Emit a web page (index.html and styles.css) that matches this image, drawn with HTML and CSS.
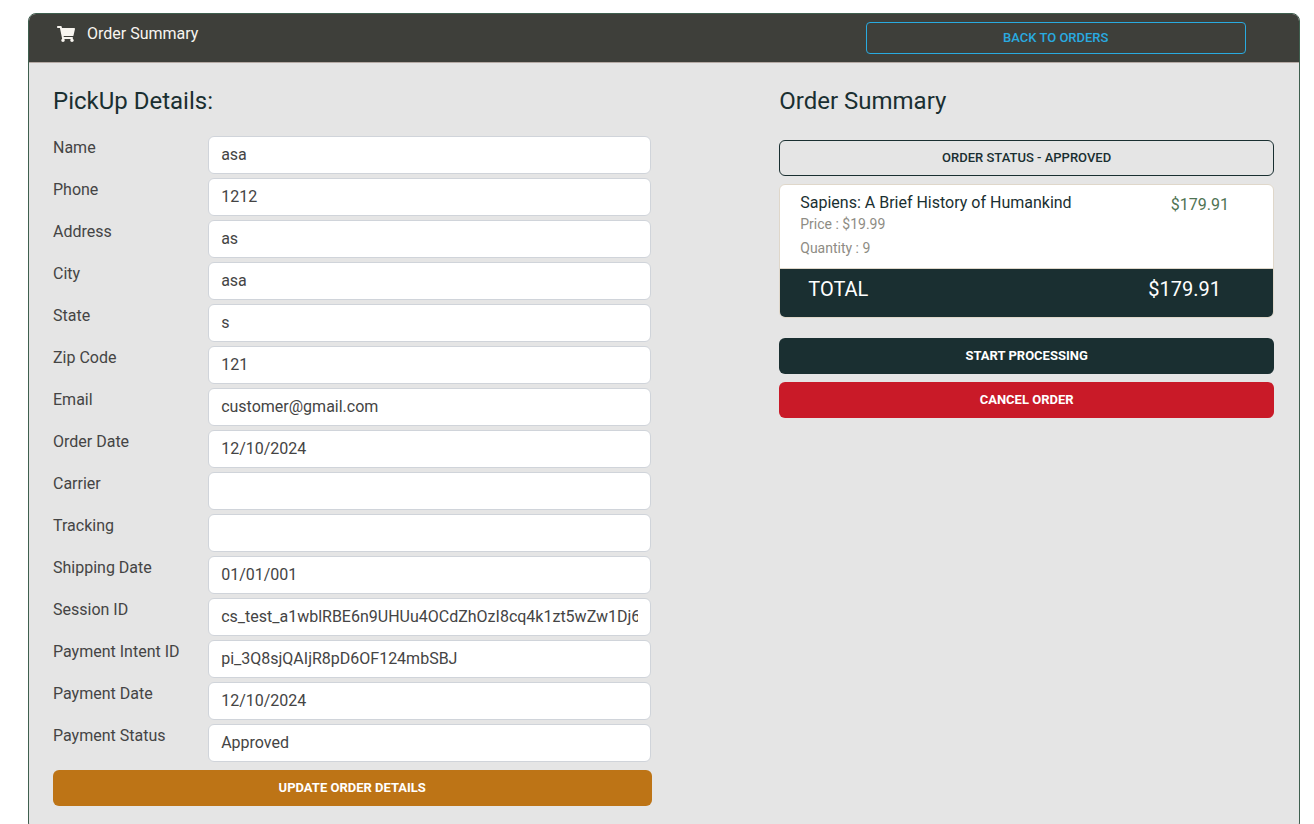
FILE: index.html
```html
<!DOCTYPE html>
<html lang="en">
<head>
<meta charset="utf-8">
<meta name="viewport" content="width=device-width, initial-scale=1">
<title>Order Summary</title>
<link rel="stylesheet" href="styles.css">
</head>
<body>
<main class="card">
  <header class="card-header">
    <div class="card-title">
      <svg class="cart-icon" viewBox="0 0 576 512" aria-hidden="true"><path fill="currentColor" d="M528.12 301.319l47.273-208C578.806 78.301 567.391 64 551.99 64H159.208l-9.166-44.81C147.758 8.021 137.93 0 126.529 0H24C10.745 0 0 10.745 0 24v16c0 13.255 10.745 24 24 24h69.883l70.248 343.435C147.325 417.1 136 435.222 136 456c0 30.928 25.072 56 56 56s56-25.072 56-56c0-15.674-6.447-29.835-16.824-40h209.647C430.447 426.165 424 440.326 424 456c0 30.928 25.072 56 56 56s56-25.072 56-56c0-22.172-12.888-41.332-31.579-50.405l5.517-24.276c3.413-15.018-8.002-29.319-23.403-29.319H218.117l-6.545-32h293.145c11.206 0 20.92-7.754 23.403-18.681z"/></svg>
      <span>Order Summary</span>
    </div>
    <a class="btn btn-outline-info" href="#">Back to Orders</a>
  </header>
  <form class="card-body">
    <section class="details">
      <h4 class="heading">PickUp Details:</h4>
      <div class="fields">
        <div class="field"><label for="name">Name</label><input id="name" type="text" value="asa"></div>
        <div class="field"><label for="phone">Phone</label><input id="phone" type="text" value="1212"></div>
        <div class="field"><label for="address">Address</label><input id="address" type="text" value="as"></div>
        <div class="field"><label for="city">City</label><input id="city" type="text" value="asa"></div>
        <div class="field"><label for="state">State</label><input id="state" type="text" value="s"></div>
        <div class="field"><label for="zip">Zip Code</label><input id="zip" type="text" value="121"></div>
        <div class="field"><label for="email">Email</label><input id="email" type="text" value="customer@gmail.com"></div>
        <div class="field"><label for="orderdate">Order Date</label><input id="orderdate" type="text" value="12/10/2024"></div>
        <div class="field"><label for="carrier">Carrier</label><input id="carrier" type="text"></div>
        <div class="field"><label for="tracking">Tracking</label><input id="tracking" type="text"></div>
        <div class="field"><label for="shipdate">Shipping Date</label><input id="shipdate" type="text" value="01/01/001"></div>
        <div class="field"><label for="session">Session ID</label><input id="session" type="text" value="cs_test_a1wblRBE6n9UHUu4OCdZhOzI8cq4k1zt5wZw1Dj6"></div>
        <div class="field"><label for="intent">Payment Intent ID</label><input id="intent" type="text" value="pi_3Q8sjQAIjR8pD6OF124mbSBJ"></div>
        <div class="field"><label for="paydate">Payment Date</label><input id="paydate" type="text" value="12/10/2024"></div>
        <div class="field"><label for="paystatus">Payment Status</label><input id="paystatus" type="text" value="Approved"></div>
      </div>
      <button class="btn btn-warning" type="submit">Update Order Details</button>
    </section>
    <section class="summary">
      <h4 class="heading">Order Summary</h4>
      <button class="btn btn-outline-primary" type="button">Order Status - Approved</button>
      <ul class="list">
        <li class="item">
          <div>
            <h6 class="item-title">Sapiens: A Brief History of Humankind</h6>
            <p class="item-meta">Price : $19.99</p>
            <p class="item-meta">Quantity : 9</p>
          </div>
          <p class="item-price">$179.91</p>
        </li>
        <li class="total"><span>TOTAL</span><span>$179.91</span></li>
      </ul>
      <div class="actions">
        <button class="btn btn-primary" type="submit">Start Processing</button>
        <button class="btn btn-danger" type="submit">Cancel Order</button>
      </div>
    </section>
  </form>
</main>
</body>
</html>
```
FILE: styles.css
```css
* {
  box-sizing: border-box;
}

body {
  margin: 0;
  padding: 13px 14px 24px 28px;
  background: #fff;
  color: #444;
  font: 400 16px/24px Roboto, "Liberation Sans", sans-serif;
}

h4, h6, p, ul {
  margin: 0;
  padding: 0;
}

.card {
  border: 1px solid #3f5f4f;
  border-radius: 8px;
  background: #e5e5e5;
  overflow: hidden;
}

.card-header {
  display: flex;
  justify-content: space-between;
  align-items: flex-start;
  padding: 8px 53px 8px 28px;
  border-bottom: 1px solid #b5aaa5;
  background: #3e3f3a;
  color: #f8f5f0;
}

.card-title {
  display: flex;
  align-items: center;
  gap: 12px;
}

.cart-icon {
  width: 18px;
  height: 16px;
}

.btn {
  display: block;
  width: 100%;
  padding: 7px 12px;
  border: 1px solid transparent;
  border-radius: 6px;
  background: transparent;
  font: 700 13px/20px Roboto, "Liberation Sans", sans-serif;
  text-align: center;
  text-decoration: none;
  text-transform: uppercase;
}

.btn-outline-info {
  width: 32%;
  padding: 5px 8px;
  border-color: #29abe0;
  border-radius: 4px;
  color: #29abe0;
  font-weight: 500;
}

.btn-warning {
  margin-top: 8px;
  background: #bd7416;
  color: #fff;
}

.btn-outline-primary {
  border-color: #1a2f31;
  color: #1a2f31;
  font-weight: 500;
}

.btn-primary {
  background: #1a2f31;
  color: #fff;
}

.btn-danger {
  background: #c91a28;
  color: #fff;
}

.card-body {
  display: flex;
  justify-content: space-between;
  padding: 24px 13px 24px 12px;
}

.details {
  width: 50%;
  padding: 0 12px;
}

.summary {
  width: 41.6667%;
  padding: 0 12px;
}

.heading {
  margin-bottom: 20px;
  color: #1a2f31;
  font-size: 24px;
  font-weight: 400;
  line-height: 29px;
}

.summary .heading {
  margin-bottom: 24px;
}

.fields {
  display: grid;
  gap: 4px;
}

.field {
  display: grid;
  grid-template-columns: 7fr 20fr;
}

.field input {
  width: 100%;
  height: 38px;
  padding: 5px 12px 7px;
  border: 1px solid #d0d4da;
  border-radius: 6px;
  background: #fff;
  color: #444;
  font: inherit;
}

.list {
  margin: 8px 0 20px;
  border: 1px solid #dfd7ca;
  border-radius: 6px;
  background: #fff;
  list-style: none;
  overflow: hidden;
}

.item {
  display: flex;
  justify-content: space-between;
  padding: 8px 44px 8px 20px;
  border-bottom: 1px solid #dfd7ca;
}

.item-title {
  color: #1a2f31;
  font-size: 16px;
  font-weight: 400;
  line-height: 19px;
}

.item-meta {
  color: #8e8c84;
  font-size: 14px;
}

.item-price {
  color: #4f7353;
}

.total {
  display: flex;
  justify-content: space-between;
  padding: 8px 52px 16px 28px;
  background: #1a2f31;
  color: #fff;
  font-size: 20px;
}

.actions {
  display: grid;
  gap: 8px;
}
```
